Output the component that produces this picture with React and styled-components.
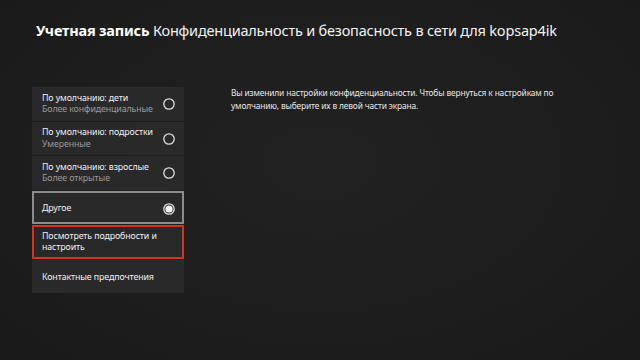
import React from "react";
import styled, { createGlobalStyle } from "styled-components";

const Global = createGlobalStyle`
  html, body { margin: 0; padding: 0; background: #1d1d1d; }
  body { font-family: "Noto Sans", "Open Sans", sans-serif; color: #e8e8e8; }
`;

const Page = styled.div`
  width: 640px;
  height: 360px;
  box-sizing: border-box;
  padding: 20px 0 0 36px;
  background: radial-gradient(ellipse at 50% 45%, #222222 0%, #1d1d1d 60%, #191919 100%);
  overflow: hidden;
`;

const Title = styled.h1`
  margin: 0;
  font-size: 14.5px;
  line-height: 20px;
  font-weight: 400;
  color: #f2f2f2;
  white-space: nowrap;
  letter-spacing: -0.2px;
  b { font-weight: 700; color: #ffffff; }
`;

const Main = styled.div`
  display: flex;
  align-items: flex-start;
  margin-top: 47px;
  margin-left: -4px;
`;

const List = styled.div`
  width: 152px;
  display: flex;
  flex-direction: column;
  gap: 1px;
`;

const Item = styled.div`
  box-sizing: border-box;
  height: 33.5px;
  display: flex;
  align-items: center;
  justify-content: space-between;
  padding-top: ${(p) => (p.$single ? "3px" : "1px")};
  background: #292929;
  border: ${(p) => (p.$focus ? "2px solid #8c8c8c" : p.$red ? "2.5px solid #d8331d" : "0")};
  padding-left: ${(p) => (p.$focus || p.$red ? "8px" : "10px")};
  padding-right: ${(p) => (p.$focus || p.$red ? "6px" : "8px")};
`;

const Texts = styled.div`
  display: flex;
  flex-direction: column;
  font-size: 8.8px;
  line-height: 11.5px;
  letter-spacing: -0.1px;
`;

const Primary = styled.span`
  color: #f0f0f0;
`;

const Secondary = styled.span`
  color: #9a9a9a;
`;

const Radio = ({ checked }) => (
  <svg width="14" height="14" viewBox="0 0 14 14">
    <circle cx="7" cy="7" r="5.2" fill="none" stroke="#e0e0e0" strokeWidth="1.3" />
    {checked && <circle cx="7" cy="7" r="3.6" fill="#ffffff" />}
  </svg>
);

const Desc = styled.p`
  margin: 0 0 0 47px;
  padding-top: 0;
  width: 360px;
  font-size: 8.4px;
  line-height: 12.5px;
  letter-spacing: -0.15px;
  color: #e6e6e6;
`;

const items = [
  { t: "По умолчанию: дети", s: "Более конфиденциальные" },
  { t: "По умолчанию: подростки", s: "Умеренные" },
  { t: "По умолчанию: взрослые", s: "Более открытые" },
];

export default function App() {
  return (
    <Page>
      <Global />
      <Title>
        <b>Учетная запись</b> Конфиденциальность и безопасность в сети для kopsap4ik
      </Title>
      <Main>
        <List>
          {items.map((it) => (
            <Item key={it.t}>
              <Texts>
                <Primary>{it.t}</Primary>
                <Secondary>{it.s}</Secondary>
              </Texts>
              <Radio />
            </Item>
          ))}
          <Item $focus $single>
            <Texts>
              <Primary>Другое</Primary>
            </Texts>
            <Radio checked />
          </Item>
          <Item $red>
            <Texts>
              <Primary>Посмотреть подробности и</Primary>
              <Primary>настроить</Primary>
            </Texts>
          </Item>
          <Item $single>
            <Texts>
              <Primary>Контактные предпочтения</Primary>
            </Texts>
          </Item>
        </List>
        <Desc>
          Вы изменили настройки конфиденциальности. Чтобы вернуться к настройкам по
          умолчанию, выберите их в левой части экрана.
        </Desc>
      </Main>
    </Page>
  );
}
